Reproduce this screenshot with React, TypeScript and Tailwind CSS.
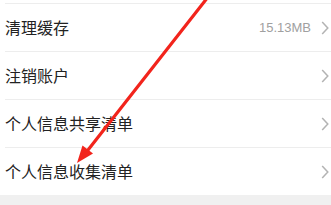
import React from 'react';

const rows = [
  { label: '清理缓存', value: '15.13MB' },
  { label: '注销账户' },
  { label: '个人信息共享清单' },
  { label: '个人信息收集清单' },
];

const Chevron = () => (
  <svg width="8" height="14" viewBox="0 0 8 14" className="shrink-0">
    <path d="M1.2 1 L6.8 7 L1.2 13" fill="none" stroke="#b3b3b3" strokeWidth="1.5" />
  </svg>
);

export default function App() {
  return (
    <div
      className="relative w-[331px] h-[205px] overflow-hidden bg-white"
      style={{ fontFamily: '"Noto Sans CJK SC", "Noto Sans", sans-serif' }}
    >
      <div className="h-[3px]" />
      {rows.map((r, i) => (
        <div key={i} className="ml-[5px] h-[48px] border-t border-[#ededed] flex items-center justify-between pr-[2px]">
          <span className="text-[16px] text-[#222222] -mt-[2px]">{r.label}</span>
          <div className="flex items-center gap-[10px]">
            {r.value && (
              <span className="text-[13px] text-[#a0a0a0]" style={{ fontFamily: '"Liberation Sans", sans-serif' }}>
                {r.value}
              </span>
            )}
            <Chevron />
          </div>
        </div>
      ))}
      <div className="h-[20px] bg-[#f0f0f0]" />

      <svg className="absolute inset-0 pointer-events-none" width="331" height="205" viewBox="0 0 331 205">
        <line x1="208" y1="-3" x2="88" y2="150" stroke="#f2241c" strokeWidth="3.2" strokeLinecap="round" />
        <polygon points="77,163 93,153.5 82.5,145.5" fill="#f2241c" />
      </svg>
    </div>
  );
}
